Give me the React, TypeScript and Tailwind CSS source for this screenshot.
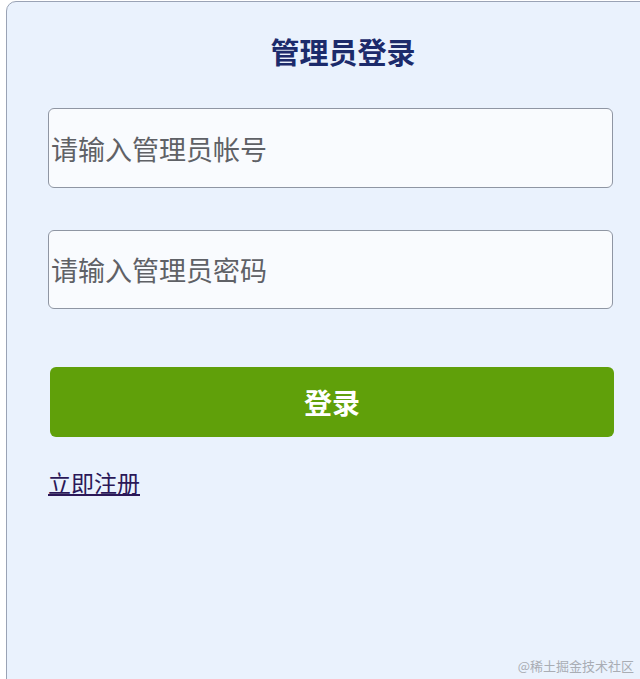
import { useState } from "react";

export default function App() {
  const [account, setAccount] = useState("");
  const [password, setPassword] = useState("");

  return (
    <div
      className="relative w-[640px] h-[679px] overflow-hidden bg-white"
      style={{ fontFamily: '"Noto Sans CJK SC", "Noto Sans", sans-serif' }}
    >
      <div className="ml-[6px] mt-[1px] w-[650px] h-[700px] bg-[#eaf2fd] border border-[#9aa3b5] rounded-[10px]">
        <h1 className="mt-[27px] pl-[24px] text-center text-[29px] leading-[44px] font-bold text-[#1c2b6b]">
          管理员登录
        </h1>

        <div className="mt-[35px] pl-[41px] flex flex-col w-[606px]">
          <input
            value={account}
            onChange={(e) => setAccount(e.target.value)}
            placeholder="请输入管理员帐号"
            className="w-[565px] h-[80px] px-[2px] bg-[#f9fbfe] border border-[#8f96a3] rounded-[6px] text-[27px] text-[#333] placeholder:text-[#5f6166] outline-none"
          />
          <input
            type="password"
            value={password}
            onChange={(e) => setPassword(e.target.value)}
            placeholder="请输入管理员密码"
            className="mt-[42px] w-[565px] h-[79px] px-[2px] bg-[#f9fbfe] border border-[#8f96a3] rounded-[6px] text-[27px] text-[#333] placeholder:text-[#5f6166] outline-none"
          />
          <button className="mt-[58px] ml-[2px] w-[564px] h-[70px] bg-[#60a00a] rounded-[6px] text-white text-[28px] font-bold">
            登录
          </button>
          <a
            href="#"
            className="mt-[30px] self-start text-[23px] leading-[30px] text-[#2b1858] underline underline-offset-2"
          >
            立即注册
          </a>
        </div>
      </div>

      <span className="absolute right-[6px] bottom-[4px] text-[13px] text-[#a9adb4]">
        @稀土掘金技术社区
      </span>
    </div>
  );
}
